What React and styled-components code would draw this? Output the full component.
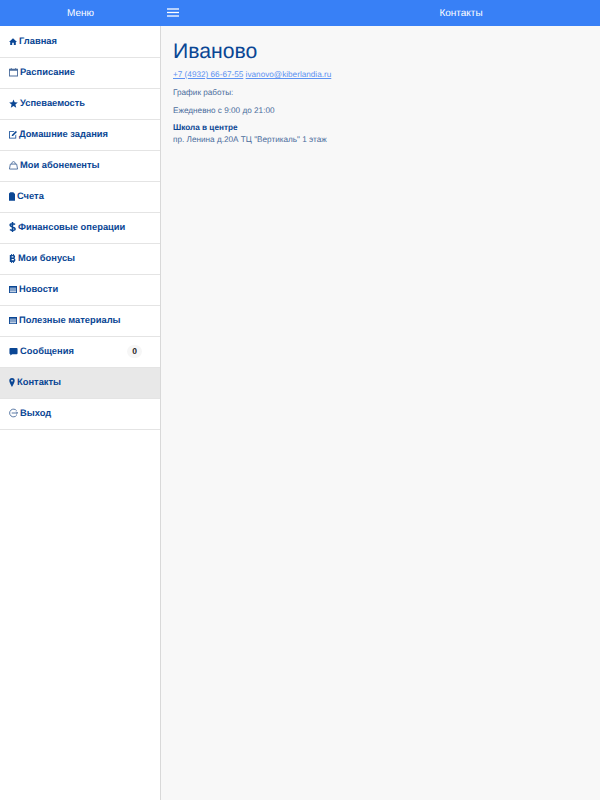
import React from "react";
import styled, { createGlobalStyle } from "styled-components";

const Global = createGlobalStyle`
  html, body { margin: 0; padding: 0; height: 100%; }
  body { font-family: "Liberation Sans", Arial, sans-serif; background: #f8f8f8; text-rendering: geometricPrecision; }
  #root { height: 100%; }
`;
const Page = styled.div`
  width: 600px; height: 800px; display: flex; overflow: hidden; background: #f8f8f8;
`;
const Sidebar = styled.aside`
  width: 160px; flex: none; background: #fff; border-right: 1px solid #d9d9d9; display: flex; flex-direction: column;
`;
const SideBar = styled.div`
  height: 26px; flex: none; background: #3880f6; color: #fff; display: flex; align-items: center; justify-content: center;
  font-size: 10px; margin-right: -1px;
`;
const NavList = styled.nav`display: flex; flex-direction: column; padding-top: 1px;`;
const Main = styled.main`flex: 1; display: flex; flex-direction: column; min-width: 0;`;
const TopBar = styled.header`
  height: 26px; flex: none; background: #3880f6; color: #fff; display: flex; align-items: center;
  font-size: 10px;
`;
const Burger = styled.svg`
  width: 12px; height: 10px; margin-left: 6px; flex: none;
  line { stroke: #fff; stroke-width: 1.3; }
`;
const TopTitle = styled.div`flex: 1; text-align: center; padding-left: 143px;`;
const Item = styled.div`
  box-sizing: border-box; height: 31px; flex: none; border-bottom: 1px solid #e4e4e4; display: flex; align-items: center; padding: 0 18px 2px 9px;
  background: ${p => p.$active ? "#e8e8e8" : "#fff"}; color: #0a4694; font-size: 9.35px; font-weight: 700;
`;
const Icon = styled.svg`width: ${p => p.$w || 8}px; height: ${p => p.$h || 9}px; flex: none; margin-right: 2px; fill: #0a4694;`;
const Label = styled.span`flex: 1;`;
const Badge = styled.span`
  width: 15px; height: 13px; border-radius: 7px; background: #f6f6f6; color: #222; font-size: 8.5px; display: flex; align-items: center; justify-content: center;
`;
const Content = styled.div`padding: 14px 12px; color: #4a6c9c; font-size: 8.2px; line-height: 10.5px;`;
const Heading = styled.h1`margin: 0 0 6px; color: #0a4694; font-size: 21.2px; font-weight: 400; line-height: 24px;`;
const Para = styled.p`margin: 0 0 7px; height: 11px;`;
const Link = styled.a`color: #5c92f2; text-decoration: underline;`;
const Bold = styled.div`font-weight: 700; color: #0a4694; margin: -1px 0 1px;`;

const items = [
  ["Главная", <Icon viewBox="0 0 10 10" key="i"><path d="M5 1 0 5.600h1.500V9.500h2.500V6.500h2V9.500h2.500V5.600H10z"/></Icon>],
  ["Расписание", <Icon $w={9} $h={10} viewBox="0 0 10 10" key="i"><path fill="#4a6c9c" fillRule="evenodd" d="M0 1.500h2V.5h1v1h4V.5h1v1h2V10H0zM1 3.500V9h8V3.500z"/></Icon>],
  ["Успеваемость", <Icon $w={9} viewBox="0 0 10 10" key="i"><path d="M5 .5 6.300 3.700 9.800 4 7.100 6.200 8 9.600 5 7.800 2 9.600 2.900 6.200.2 4 3.700 3.700z"/></Icon>],
  ["Домашние задания", <Icon viewBox="0 0 10 10" key="i"><path fillRule="evenodd" d="M0 1h7L6 2H1v7h7V6l1-1v5H0z"/><path d="M8.500.5 10 2 5 7H3.500V5.500z"/></Icon>],
  ["Мои абонементы", <Icon $w={9} $h={10} viewBox="0 0 10 10" key="i"><path fill="none" stroke="#4a6c9c" strokeWidth="1" d="M.5 9.500h9L8.500 4h-7zM3 4C3 .3 7 .3 7 4"/></Icon>],
  ["Счета", <Icon $w={6} viewBox="0 0 7 10" key="i"><path d="M1.500 0H5l2 2v8H0V1.500z"/></Icon>],
  ["Финансовые операции", <Icon $w={7} $h={10} viewBox="0 0 7 10" key="i"><path fill="none" stroke="#0a4694" strokeWidth="1.500" d="M6 2.500C5 1.300 1 1.300 1 3c0 2.400 5.200 1.500 5.200 4 0 1.700-4 1.800-5.200.5M3.500 0v10"/></Icon>],
  ["Мои бонусы", <Icon $w={7} viewBox="0 0 7 10" key="i"><path fillRule="evenodd" d="M2 0h1v1h1V0h1v1.200C6.800 1.600 6.800 4 5.500 4.600 7.200 5 7.200 8.500 5 8.800V10H4V9H3v1H2V9H.5V1H2zM2.500 2.500v1.500h2v-1.500zM2.500 5.500v1.500h2.500v-1.500z"/></Icon>],
  ["Новости", <Icon viewBox="0 0 9 10" key="i"><path fillRule="evenodd" d="M0 1h9v8H0zM1 3v1h7V3zm0 2v1h7V5zm0 2v1h7V7z"/></Icon>],
  ["Полезные материалы", <Icon viewBox="0 0 9 10" key="i"><path fillRule="evenodd" d="M0 1h9v8H0zM1 3v1h7V3zm0 2v1h7V5zm0 2v1h7V7z"/></Icon>],
  ["Сообщения", <Icon $w={9} viewBox="0 0 9 10" key="i"><path d="M1 1h7a1 1 0 0 1 1 1v5a1 1 0 0 1-1 1H3L1 9.500V8a1 1 0 0 1-1-1V2a1 1 0 0 1 1-1z"/></Icon>, "0"],
  ["Контакты", <Icon $w={6} viewBox="0 0 6 10" key="i"><path fillRule="evenodd" d="M3 0a3 3 0 0 1 3 3c0 2-3 7-3 7S0 5 0 3a3 3 0 0 1 3-3zm0 2a1 1 0 1 0 0 2 1 1 0 0 0 0-2z"/></Icon>],
  ["Выход", <Icon $w={9} $h={10} viewBox="0 0 10 10" key="i"><path fill="none" stroke="#4a6c9c" d="M8.500 2.500a4.300 4.300 0 1 0 0 5M3 5h6.500M8 3.500 9.500 5 8 6.500"/></Icon>],
];

export default function App() {
  return (
    <Page>
      <Global />
      <Sidebar>
        <SideBar>Меню</SideBar>
        <NavList>
          {items.map(([t, icon, badge]) => (
            <Item key={t} $active={t === "Контакты"}>
              {icon}
              <Label>{t}</Label>
              {badge && <Badge>{badge}</Badge>}
            </Item>
          ))}
        </NavList>
      </Sidebar>
      <Main>
        <TopBar>
          <Burger viewBox="0 0 12 10">
            <line x1="0" x2="12" y1="1" y2="1" />
            <line x1="0" x2="12" y1="4.500" y2="4.500" />
            <line x1="0" x2="12" y1="8" y2="8" />
          </Burger>
          <TopTitle>Контакты</TopTitle>
        </TopBar>
        <Content>
          <Heading>Иваново</Heading>
          <Para><Link>+7 (4932) 66-67-55</Link> <Link>ivanovo@kiberlandia.ru</Link></Para>
          <Para>График работы:</Para>
          <Para>Ежедневно с 9:00 до 21:00</Para>
          <Bold>Школа в центре</Bold>
          <div>пр. Ленина д.20А ТЦ "Вертикаль" 1 этаж</div>
        </Content>
      </Main>
    </Page>
  );
}
